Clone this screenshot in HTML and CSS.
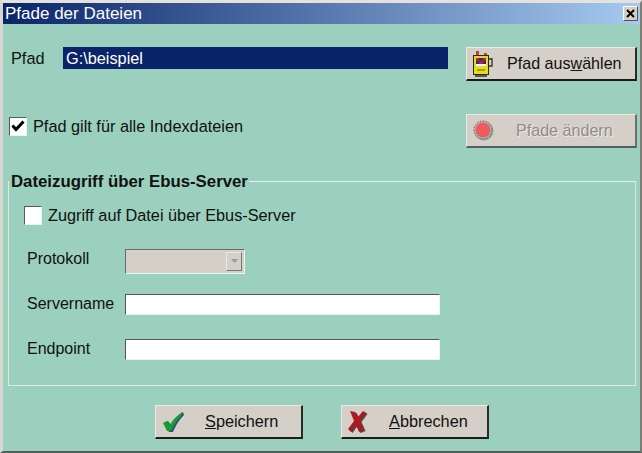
FILE: index.html
```html
<!DOCTYPE html>
<html lang="de">
<head>
<meta charset="utf-8">
<title>Pfade der Dateien</title>
<link rel="stylesheet" href="styles.css">
</head>
<body>
<div class="window">
  <header class="titlebar">
    <span class="title">Pfade der Dateien</span>
    <span class="close"><svg width="9" height="9" viewBox="0 0 9 9"><path d="M1 1l7 7M8 1L1 8" stroke="#000" stroke-width="2" fill="none"/></svg></span>
  </header>
  <main class="client">
    <section class="top">
      <div class="path-row">
        <span class="path-label">Pfad</span>
        <div class="path-value">G:\beispiel</div>
        <button class="btn btn-side">
          <svg class="btn-icon" width="30" height="28" viewBox="0 0 30 28">
            <path d="M7 1h3v4H7zM15 3h3v3h-3z" fill="#c8403a"/>
            <rect x="4" y="5" width="16" height="20" fill="#2a2a10"/>
            <rect x="5" y="6" width="14" height="18" fill="#e4dc18"/>
            <rect x="7" y="8" width="10" height="8" fill="#f4f4f4"/>
            <path d="M7 8h3v3H7zM14 8h3v3h-3zM10 11h4v3h-4z" fill="#c02030"/>
            <path d="M10 8h4v3h-4zM7 11h3v3H7zM14 11h3v3h-3z" fill="#28308c"/>
            <path d="M8 19h8v2H8z" fill="#a09820"/>
            <path d="M20 9h3v7h-3M23 8v8" stroke="#333" stroke-width="1.300" fill="none"/>
            <rect x="6" y="25" width="12" height="2" fill="#555"/>
          </svg>
          <span class="btn-text">Pfad aus<u>w</u>ählen</span>
        </button>
      </div>
      <div class="check-row">
        <label class="check-label">
          <span class="check"><svg width="14" height="14" viewBox="0 0 14 14"><path d="M1.500 6.500l3.500 4L12.500 2.500" stroke="#000" stroke-width="3" fill="none"/></svg></span>
          Pfad gilt für alle Indexdateien
        </label>
        <button class="btn btn-side btn-disabled" disabled>
          <svg class="btn-icon" width="30" height="28" viewBox="0 0 30 28">
            <circle cx="15" cy="14" r="9.500" fill="#8fa8a2"/>
            <circle cx="14" cy="13" r="9" fill="#b8b4ac" stroke="#555" stroke-width="1" stroke-dasharray="1.500 1.500"/>
            <circle cx="14" cy="13" r="7.500" fill="#ee5a5e"/>
          </svg>
          <span class="btn-text">Pfade ändern</span>
        </button>
      </div>
    </section>
    <fieldset class="group">
      <legend class="legend">Dateizugriff über Ebus-Server</legend>
      <label class="check-label ebus-check"><span class="check"></span>Zugriff auf Datei über Ebus-Server</label>
      <div class="field protokoll">
        <span class="field-label">Protokoll</span>
        <div class="combo"><span class="combo-arrow"><svg width="7" height="4" viewBox="0 0 7 4"><path d="M0 0h7L3.500 4z" fill="#9a9a9a"/></svg></span></div>
      </div>
      <div class="field server">
        <span class="field-label">Servername</span>
        <div class="input"></div>
      </div>
      <div class="field endpoint">
        <span class="field-label">Endpoint</span>
        <div class="input"></div>
      </div>
    </fieldset>
    <footer class="actions">
      <button class="btn btn-action">
        <svg class="btn-icon" width="26" height="24" viewBox="0 0 26 24">
          <path d="M2 13l4-2 3 4c3-6 7-9 12-13l1 3C17 10 14 15 11 22H7z" fill="#3a4a78" transform="translate(1 0)"/>
          <path d="M2 13l4-2 3 4c3-6 7-9 12-13l-1 4C16 10 13 15 10 21H6z" fill="#14a030"/>
        </svg>
        <span class="btn-text"><u>S</u>peichern</span>
      </button>
      <button class="btn btn-action">
        <svg class="btn-icon x-icon" width="26" height="24" viewBox="0 0 26 24">
          <path d="M3 1l5 1 3 5 5-6 3 2-6 8 4 9-5 2-3-7-5 7-3-3 6-8z" fill="#4a4a4a" transform="translate(1.500 1)"/>
          <path d="M3 1l5 1 3 5 5-6 3 2-6 8 4 9-5 2-3-7-5 7-3-3 6-8z" fill="#b01820"/>
        </svg>
        <span class="btn-text"><u>A</u>bbrechen</span>
      </button>
    </footer>
  </main>
</div>
</body>
</html>
```
FILE: styles.css
```css
* { box-sizing: border-box; }
html, body { margin: 0; padding: 0; }
body {
  width: 642px;
  height: 453px;
  overflow: hidden;
  font-family: "Liberation Sans", Arial, sans-serif;
  font-size: 16.3px;
  color: #111;
}
.window {
  width: 642px;
  height: 453px;
  display: flex;
  flex-direction: column;
  background: #9bd0be;
  border-top: 3px solid #e4e2dc;
  border-left: 3px solid #d8d6cf;
  border-right: 2px solid #7d7d78;
  border-bottom: 2px solid #55605c;
}
.titlebar {
  height: 21px;
  flex: none;
  display: flex;
  align-items: center;
  justify-content: space-between;
  padding: 0 2px;
  background: linear-gradient(to right, #0a246a, #a6caf0);
  color: #fff;
}
.title { font-size: 17px; }
.close {
  width: 15px;
  height: 15px;
  display: flex;
  align-items: center;
  justify-content: center;
  background: #d4d0c8;
  border: 1px solid;
  border-color: #fff #555 #555 #fff;
}
.client { flex: 1; padding: 23px 3px 0 5px; display: flex; flex-direction: column; }
.top { display: flex; flex-direction: column; }
.path-row { display: flex; align-items: flex-start; height: 67px; }
.path-label { width: 55px; padding: 2px 0 0 3px; }
.path-value {
  width: 385px;
  height: 22px;
  background: #0a246a;
  color: #fff;
  padding: 2px 0 0 3px;
}
.btn {
  display: flex;
  align-items: center;
  height: 34px;
  padding: 0;
  font: inherit;
  color: #111;
  background: #d4d0c8;
  border: 2px solid;
  border-color: #eceae4 #2a2a2a #1c1c1c #eceae4;
  border-width: 1px 2px 2px 1px;
}
.btn-side { width: 171px; margin-left: 18px; font-size: 16.1px; }
.btn-side .btn-icon { margin-left: 2px; flex: none; }
.btn-side .btn-text { margin-left: 8px; }
.btn-disabled { color: #8f8d88; border-color: #eceae4 #6f6f6c #55605c #eceae4; text-shadow: 1px 1px 0 #eceae4; }
.btn-side.btn-disabled .btn-text { margin-left: 17px; }
.check-row { display: flex; align-items: flex-start; justify-content: space-between; }
.check-label { display: flex; align-items: center; gap: 6px; }
.check-row .check-label { margin: 0 0 0 1px; height: 24px; }
.check {
  width: 18px;
  height: 19px;
  flex: none;
  display: flex;
  align-items: center;
  justify-content: center;
  background: #fff;
  border: 1px solid;
  border-color: #5a5a5a #e8f4ee #e8f4ee #5a5a5a;
}
.group {
  margin: 25px 0 0 0;
  padding: 0;
  width: 628px;
  height: 213px;
  border: 1px solid #dfe8e2;
  border-top-color: #e6efe9;
  min-width: 0;
  display: block;
}
.legend { padding: 0 1px 0 2px; font-weight: bold; font-size: 16.8px; line-height: 17px; }
.ebus-check { margin: 15px 0 0 15px; height: 20px; }
.field { display: flex; align-items: center; }
.field-label { width: 116px; padding-left: 18px; font-size: 16px; }
.protokoll { margin-top: 23px; height: 26px; }
.protokoll .field-label { padding-bottom: 4px; }
.server { margin-top: 19px; height: 22px; }
.endpoint { margin-top: 23px; height: 22px; }
.combo {
  width: 120px;
  height: 25px;
  background: #d4d0c8;
  border: 1px solid;
  border-color: #6a6a66 #eef6f2 #eef6f2 #6a6a66;
  padding: 2px;
  display: flex;
  justify-content: flex-end;
}
.combo-arrow {
  width: 16px;
  display: flex;
  align-items: center;
  justify-content: center;
  border: 1px solid;
  border-color: #eceae4 #777 #777 #eceae4;
}
.input {
  width: 315px;
  height: 21px;
  background: #fff;
  border: 1px solid;
  border-color: #555 #e8f4ee #e8f4ee #555;
}
.actions { display: flex; gap: 38px; margin: 19px 0 0 147px; }
.btn-action { width: 148px; }
.btn-action .btn-icon { margin-left: 5px; flex: none; }
.btn-action .btn-text { margin-left: 18px; }
.btn-action .x-icon + .btn-text { margin-left: 16px; }
```
